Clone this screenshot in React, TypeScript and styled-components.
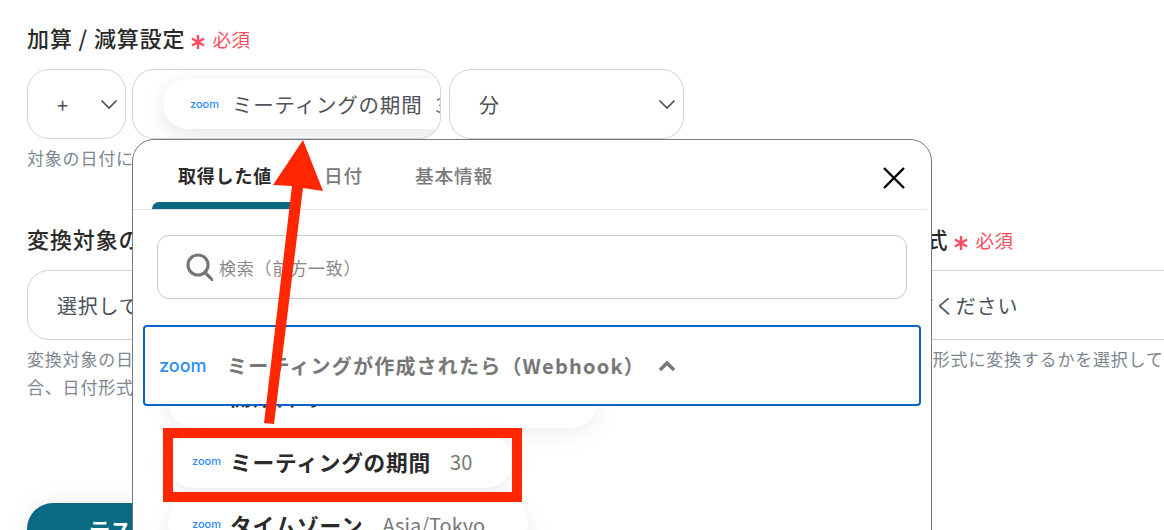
import * as React from 'react';
import styled, { createGlobalStyle } from 'styled-components';

const GlobalStyle = createGlobalStyle`
  html, body {
    margin: 0;
    padding: 0;
    background: #fff;
  }

  body {
    font-family: 'Noto Sans CJK JP', 'Noto Sans', sans-serif;
    letter-spacing: 0.05em;
  }
`;

const Page = styled.div`
  position: relative;
  width: 1164px;
  height: 530px;
  overflow: hidden;
  padding: 22px 0 0 27px;
  box-sizing: border-box;
`;

const Label = styled.div`
  display: flex;
  align-items: center;
  height: 30px;
  font-size: 22px;
  font-weight: 500;
  color: #2a2a2a;
  white-space: nowrap;
  letter-spacing: 0.04em;
`;

const OutputLabel = styled(Label)`
  padding-left: 11px;
`;

const Required = styled.span`
  display: inline-flex;
  align-items: center;
  gap: 6px;
  margin: 4px 0 0 5px;
  font-size: 18.5px;
  font-weight: 400;
  color: #ff4b5f;
  letter-spacing: 0.03em;

  svg {
    margin-top: 5px;
  }
`;

const FieldRow = styled.div`
  display: flex;
  margin-top: 17px;
`;

const Field = styled.div<{ $width: number; $gap?: number }>`
  display: flex;
  align-items: center;
  justify-content: space-between;
  box-sizing: border-box;
  flex: none;
  width: ${(p) => p.$width}px;
  height: 70px;
  margin-left: ${(p) => p.$gap ?? 0}px;
  padding: 0 7px 0 29px;
  border: 1px solid #cfd3da;
  border-radius: 22px;
  overflow: hidden;
  font-size: 20px;
  color: #4a5058;
  background: #fff;
`;

const ChipField = styled(Field)`
  padding-left: 30px;
  justify-content: flex-start;
`;

const Chip = styled.div`
  display: flex;
  align-items: center;
  flex: none;
  height: 50px;
  padding: 0 40px 0 27px;
  border-radius: 25px;
  background: #fff;
  box-shadow: 0 6px 24px rgba(0, 0, 0, 0.1);
  white-space: nowrap;
  font-size: 20.5px;
  color: #4f545b;
`;

const Plus = styled.span`
  font-size: 20px;
`;

const ZoomLogo = styled.span<{ $size: number; $width: number }>`
  display: inline-block;
  flex: none;
  width: ${(p) => p.$width}px;
  font-family: 'Inter', 'Noto Sans', sans-serif;
  font-size: ${(p) => p.$size}px;
  line-height: 1;
  font-weight: 500;
  letter-spacing: 0;
  color: #2d8cff;
`;

const ChipText = styled.span`
  margin-left: 13px;
`;

const ChipValue = styled.span`
  margin-left: 13px;
  color: #777;
`;

const Help = styled.div`
  margin-top: 5px;
  font-size: 17px;
  line-height: 28px;
  color: #7d8590;
  white-space: nowrap;
`;

const OutputHelp = styled(Help)`
  padding-left: 3px;
`;

const ConvertGrid = styled.div`
  display: grid;
  grid-template-columns: 768px 500px;
  column-gap: 28px;
  margin-top: 51px;
`;

const ConvertField = styled(Field)`
  width: 100%;
`;

const TestButton = styled.button`
  display: block;
  height: 52px;
  margin-top: 102px;
  padding: 0 62px;
  border: 0;
  border-radius: 27px;
  background: #0a6a84;
  box-shadow: 0 0 24px rgba(0, 0, 0, 0.08);
  color: #fff;
  font: inherit;
  font-size: 21px;
  font-weight: 700;
`;

const Popover = styled.div`
  position: absolute;
  isolation: isolate;
  top: 139px;
  left: 132px;
  box-sizing: border-box;
  width: 800px;
  height: 440px;
  border: 1px solid #76787c;
  border-radius: 22px;
  background: #fff;
  overflow: hidden;
`;

const TabBar = styled.div`
  display: flex;
  align-items: stretch;
  position: relative;
  box-sizing: border-box;
  height: 70px;
  margin-right: 5px;
  padding-left: 19px;
  border-bottom: 1px solid #e2e4e7;
`;

const Tab = styled.div<{ $active?: boolean }>`
  position: relative;
  padding: 20px 26px 0 26px;
  font-size: ${(p) => (p.$active ? 18 : 18.7)}px;
  line-height: 30px;
  font-weight: ${(p) => (p.$active ? 700 : 500)};
  color: ${(p) => (p.$active ? '#2a2a2a' : '#7a7a7a')};

  ${(p) =>
    p.$active &&
    `
    &::after {
      content: '';
      position: absolute;
      left: 0;
      right: 0;
      bottom: 0;
      height: 7px;
      border-radius: 7px 7px 0 0;
      background: #0a6a84;
    }
  `}
`;

const CloseButton = styled.div`
  position: absolute;
  top: 26px;
  right: 20px;
  width: 24px;
  height: 24px;
`;

const SearchBox = styled.div`
  display: flex;
  align-items: center;
  box-sizing: border-box;
  height: 64px;
  margin: 25px 24px 0;
  padding-left: 28px;
  border: 1px solid #c9c9c9;
  border-radius: 12px;
  font-size: 17px;
  color: #8a8a8a;
`;

const SearchText = styled.span`
  margin-left: 6px;
`;

const GroupHeader = styled.div`
  position: relative;
  z-index: 1;
  display: flex;
  align-items: center;
  box-sizing: border-box;
  height: 81px;
  margin: 26px 10px 0;
  padding-left: 14px;
  border: 2px solid #0a63c9;
  border-radius: 4px;
  background: #fff;
  font-size: 20px;
  font-weight: 700;
  color: #777;
  white-space: nowrap;
`;

const GroupTitle = styled.span`
  margin-left: 22px;
  letter-spacing: 0.06em;
`;

const GroupChevron = styled.svg`
  margin-left: 13px;
`;

const ItemList = styled.div`
  display: flex;
  flex-direction: column;
  align-items: flex-start;
  gap: 9px;
  margin: -35px 0 0 35px;
`;

const Item = styled.div<{ $pad: number }>`
  display: flex;
  align-items: center;
  box-sizing: border-box;
  height: 54px;
  padding: 0 ${(p) => p.$pad}px 0 24px;
  border-radius: 27px;
  background: #fff;
  box-shadow: 0 4px 26px rgba(0, 0, 0, 0.08);
  white-space: nowrap;
`;

// first row sits mostly under the group header
const ScrolledItem = styled(Item)`
  height: 57px;
  padding-bottom: 8px;
  margin-bottom: -3px;
`;

const ItemName = styled.span`
  margin-left: 9px;
  font-size: 21.7px;
  font-weight: 700;
  color: #2a2a2a;
`;

const ItemValue = styled.span`
  margin-left: 19px;
  font-size: 20px;
  letter-spacing: 0;
  color: #777;
`;

const HighlightFrame = styled.div`
  position: absolute;
  top: 428px;
  left: 163px;
  box-sizing: border-box;
  width: 359px;
  height: 74px;
  border: 10px solid #ff2600;
`;

const ArrowOverlay = styled.svg`
  position: absolute;
  top: 0;
  left: 0;
  pointer-events: none;
`;

const Chevron = ({ size = 18 }: { size?: number }) => (
  <svg width={size} height={size} viewBox="0 0 18 18" fill="none">
    <path d="M1.5 5.5 9 13l7.5-7.5" stroke="#4a5058" strokeWidth="1.7" />
  </svg>
);

const RequiredMark = () => (
  <Required>
    <svg width="16" height="16" viewBox="0 0 16 16" stroke="#ff4b5f" strokeWidth="2.4">
      <path d="M8 1v14M2 4.5l12 7M14 4.5l-12 7" />
    </svg>
    必須
  </Required>
);

const App = () => {
  return (
    <>
      <GlobalStyle />
      <Page>
        <Label>
          加算 / 減算設定
          <RequiredMark />
        </Label>
        <FieldRow>
          <Field $width={99}>
            <Plus>+</Plus>
            <Chevron />
          </Field>
          <ChipField $width={309} $gap={6}>
            <Chip>
              <ZoomLogo $size={11} $width={29}>zoom</ZoomLogo>
              <ChipText>ミーティングの期間</ChipText>
              <ChipValue>30</ChipValue>
            </Chip>
          </ChipField>
          <Field $width={235} $gap={8}>
            分
            <Chevron />
          </Field>
        </FieldRow>
        <Help>対象の日付に加算または減算する値と単位を設定してください。</Help>

        <ConvertGrid>
          <div>
            <Label>
              変換対象の日付
              <RequiredMark />
            </Label>
            <FieldRow>
              <ConvertField $width={768}>選択してください</ConvertField>
            </FieldRow>
            <Help>
              変換対象の日付を選択してください。取得した値が日付形式ではない場
              <br />
              合、日付形式に変換してから設定してください。
            </Help>
          </div>
          <div>
            <OutputLabel>
              変換後形式
              <RequiredMark />
            </OutputLabel>
            <FieldRow>
              <ConvertField $width={500}>選択してください</ConvertField>
            </FieldRow>
            <OutputHelp>変換後の日付形式に変換するかを選択してください。</OutputHelp>
          </div>
        </ConvertGrid>

        <TestButton>テスト</TestButton>

        <Popover>
          <TabBar>
            <Tab $active>取得した値</Tab>
            <Tab>日付</Tab>
            <Tab>基本情報</Tab>
            <CloseButton>
              <svg width="24" height="24" viewBox="0 0 24 24" stroke="#000" strokeWidth="2.4">
                <path d="M2 2l20 20M22 2 2 22" />
              </svg>
            </CloseButton>
          </TabBar>
          <SearchBox>
            <svg width="27" height="28" viewBox="0 0 27 28" fill="none" stroke="#777" strokeWidth="3.2">
              <circle cx="12" cy="12" r="10" />
              <path d="M19 19.5 26 26.5" strokeLinecap="round" />
            </svg>
            <SearchText>検索（前方一致）</SearchText>
          </SearchBox>
          <GroupHeader>
            <ZoomLogo $size={18} $width={46}>zoom</ZoomLogo>
            <GroupTitle>ミーティングが作成されたら（Webhook）</GroupTitle>
            <GroupChevron width="18" height="12" viewBox="0 0 18 12" fill="none">
              <path d="M2 10 9 3l7 7" stroke="#777" strokeWidth="3.4" />
            </GroupChevron>
          </GroupHeader>
          <ItemList>
            <ScrolledItem $pad={278}>
              <ZoomLogo $size={11} $width={29}>zoom</ZoomLogo>
              <ItemName>開始日時</ItemName>
            </ScrolledItem>
            <Item $pad={40}>
              <ZoomLogo $size={11} $width={29}>zoom</ZoomLogo>
              <ItemName>ミーティングの期間</ItemName>
              <ItemValue>30</ItemValue>
            </Item>
            <Item $pad={43}>
              <ZoomLogo $size={11} $width={29}>zoom</ZoomLogo>
              <ItemName>タイムゾーン</ItemName>
              <ItemValue>Asia/Tokyo</ItemValue>
            </Item>
          </ItemList>
        </Popover>

        <HighlightFrame />
        <ArrowOverlay width="1164" height="530" viewBox="0 0 1164 530">
          <polygon points="303,140 323,191 303,188 274,424 264,423 292,186 273,185" fill="#ff2600" />
        </ArrowOverlay>
      </Page>
    </>
  );
};

export default App;
